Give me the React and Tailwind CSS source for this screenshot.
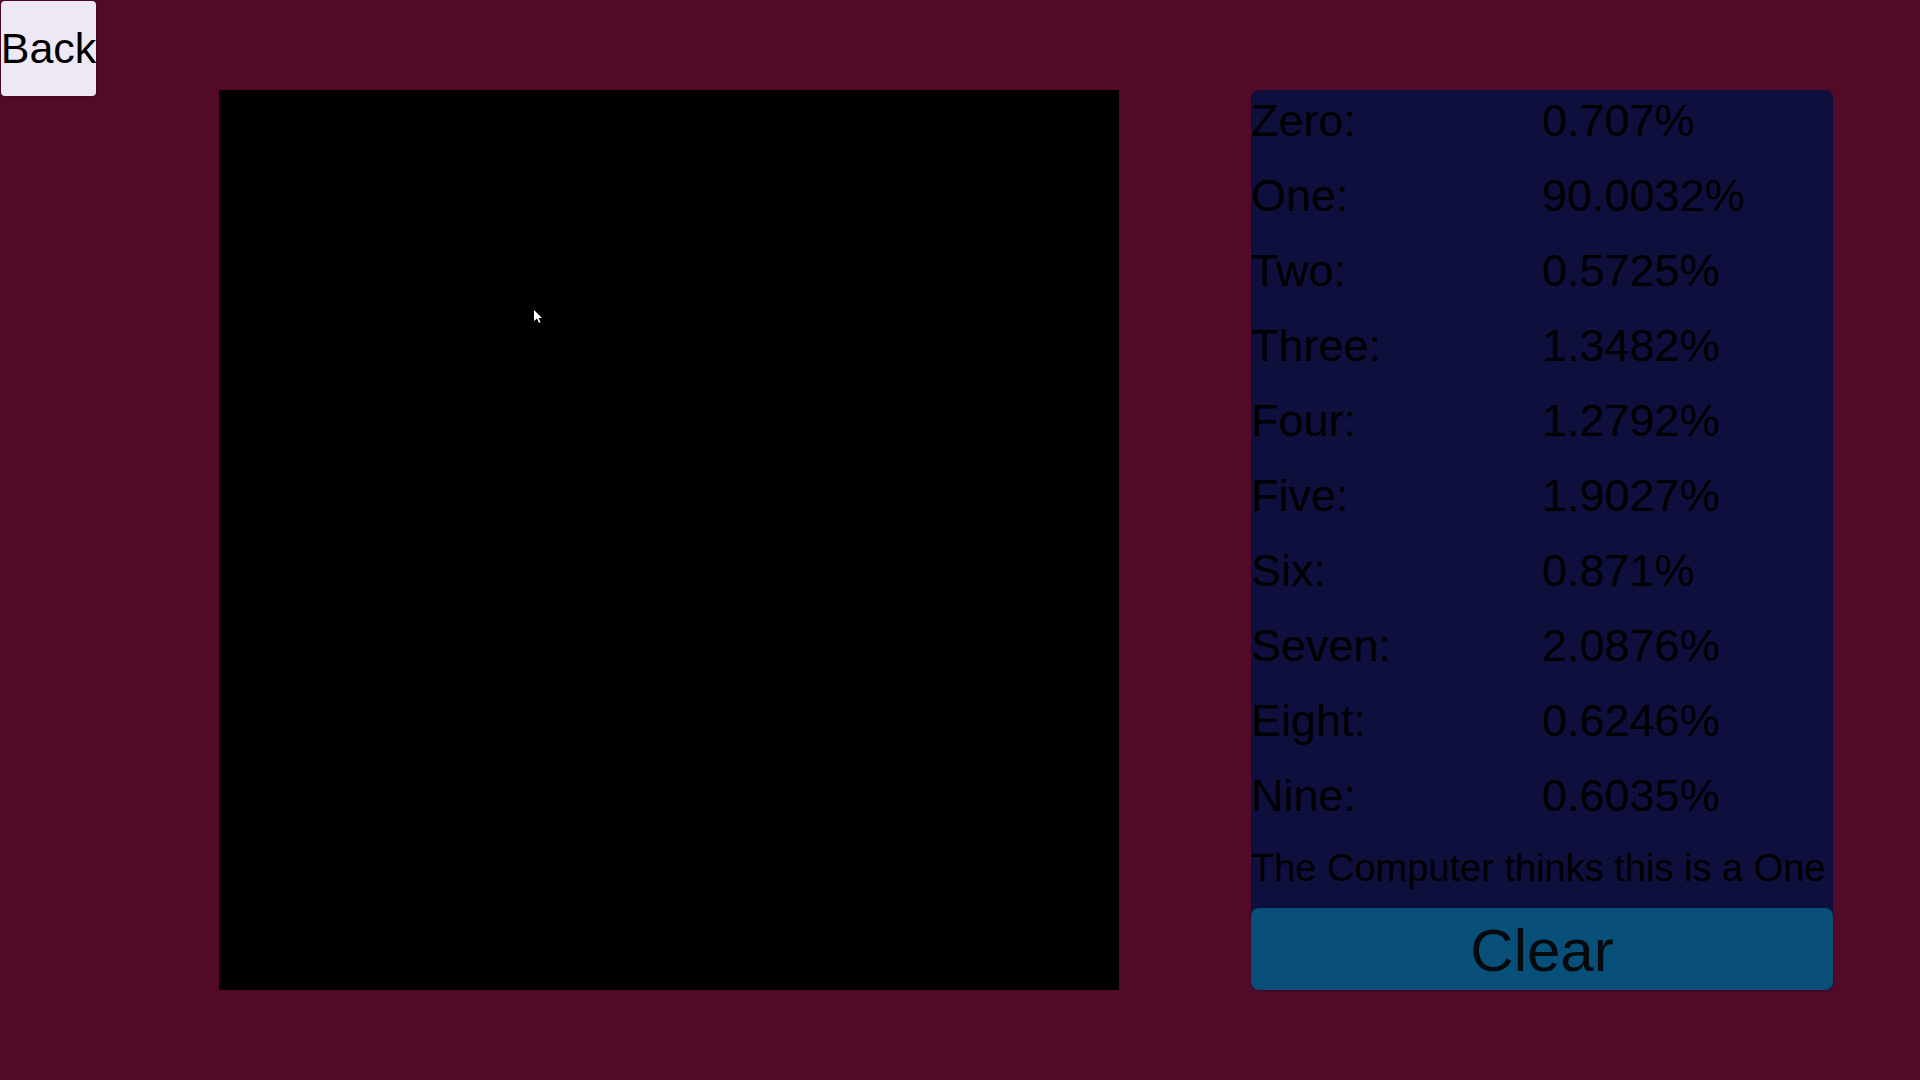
const rows = [
  ["Zero", "0.707%"],
  ["One", "90.0032%"],
  ["Two", "0.5725%"],
  ["Three", "1.3482%"],
  ["Four", "1.2792%"],
  ["Five", "1.9027%"],
  ["Six", "0.871%"],
  ["Seven", "2.0876%"],
  ["Eight", "0.6246%"],
  ["Nine", "0.6035%"],
];

export default function App() {
  return (
    <div className="flex min-h-screen bg-[#530a29] font-['Liberation_Sans',sans-serif] text-black">
      <div className="w-[11.4%] shrink-0 pt-px pl-px">
        <button className="flex size-[95px] items-center justify-center rounded-sm bg-[#ede8f4] text-[43px] whitespace-nowrap shadow-[0_0_2px_#2a0518]">
          Back
        </button>
      </div>
      <main className="mt-[90px] mr-[87px] flex flex-1 items-start justify-between">
        <div className="relative aspect-square w-[900px] bg-black">
          <svg className="absolute top-[219px] left-[315px] h-4 w-3" viewBox="0 0 12 16" aria-hidden="true">
            <path d="M0 1V12L3 9.500L5 14L6.500 13.300L4.500 9H8Z" fill="#fff" />
          </svg>
        </div>
        <section className="flex w-[582px] flex-col rounded-lg bg-[#0f0f3d]">
          <table className="w-full table-fixed text-left text-[45px] leading-[62px]">
            <tbody>
              {rows.map(([name, value]) => (
                <tr key={name} className="h-[75px] align-top">
                  <th scope="row" className="font-normal">{name}:</th>
                  <td>{value}</td>
                </tr>
              ))}
            </tbody>
          </table>
          <p className="h-[68px] text-[38px] leading-[56px] whitespace-nowrap">The Computer thinks this is a One</p>
          <button className="h-[82px] rounded-lg bg-[#084f79] pt-1 text-[60px] leading-none text-[#060a0d] shadow-[0_0_2px_#0a0a2a]">Clear</button>
        </section>
      </main>
    </div>
  );
}
